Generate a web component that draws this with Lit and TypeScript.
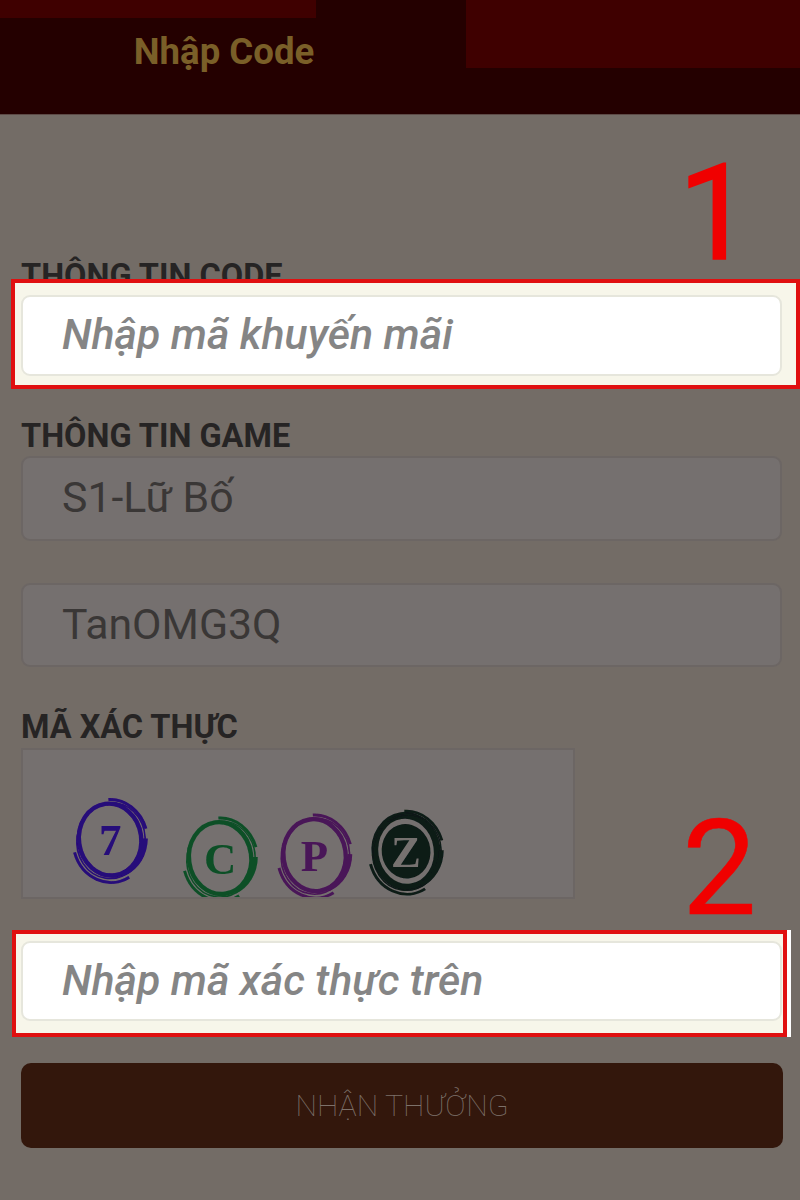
import { LitElement, html, css, svg } from "lit";
import { customElement } from "lit/decorators.js";

const swirl = (cx: number, cy: number, color: string, ch: string, solid = false) => svg`
  <g filter="url(#soft)">
    <g transform="translate(${cx} ${cy}) rotate(-8)">
      ${solid ? svg`<ellipse rx="25" ry="28" fill="${color}"></ellipse>` : ""}
      <ellipse rx="32" ry="37" fill="none" stroke="${color}" stroke-width="${solid ? 7 : 4.5}"></ellipse>
      <ellipse cx="1" cy="1" rx="35" ry="39" fill="none" stroke="${color}" stroke-width="1.6" transform="rotate(16)"></ellipse>
      <path d="M-38 8A38 42 0 0 0 14 41" fill="none" stroke="${color}" stroke-width="3"></path>
      <path d="M4 -41A37 42 0 0 1 38 -6" fill="none" stroke="${color}" stroke-width="3"></path>
      <path d="M10 36A35 40 0 0 0 36 4" fill="none" stroke="${color}" stroke-width="5"></path>
    </g>
    <text class="glyph" x="${cx}" y="${cy + 16}" text-anchor="middle" fill="${solid ? "#77726f" : color}">${ch}</text>
  </g>
`;

@customElement("app-root")
export class AppRoot extends LitElement {
  static styles = css`
    :host { display: block; width: 800px; height: 1200px; overflow: hidden; position: relative; background: #736c66; font-family: Roboto, "Noto Sans", sans-serif; }
    * { box-sizing: border-box; }
    header { height: 115px; background: #240000; border-bottom: 1px solid #5c4a46; display: flex; }
    .tab { width: 466px; display: flex; flex-direction: column; }
    .strip { width: 316px; height: 18px; background: #3f0000; }
    .title { width: 448px; margin-top: 14px; text-align: center; font-size: 36.6px; line-height: 40px; font-weight: 700; color: #7a5f28; }
    .side { width: 334px; height: 68px; background: #3f0000; }
    main { padding: 0 18px 0 21px; display: flex; flex-direction: column; }
    .label { font-size: 32.5px; line-height: 34px; font-weight: 700; color: #262424; white-space: nowrap; }
    .l1 { margin-top: 144px; height: 20px; }
    .l2 { margin-top: 30px; height: 37px; }
    .l3 { margin-top: 43px; height: 38px; }
    .field { height: 85px; border: 2px solid #6c6664; border-radius: 9px; background: #75706f; padding: 0 0 3px 39px; display: flex; align-items: center; font-size: 42.8px; color: #3a3736; }
    .field + .field { margin-top: 42px; height: 84px; }
    .mark { border: 4px solid #e01010; background: #f7f6ea; display: flex; }
    .m1 { margin: 0 -18px 0 -10px; height: 110px; padding: 12px 14px 9px 6px; }
    .m2 { margin: 31px -5px 0 -9px; height: 107px; padding: 7px 1px 12px 5px; box-shadow: 4px 0 0 #fff; }
    .input { flex: 1; border: 2px solid #e6e6dc; border-radius: 9px; background: #fff; padding: 0 0 3px 39px; display: flex; align-items: center; font-size: 42.8px; font-style: italic; font-weight: 500; color: #858585; }
    .captcha { width: 554px; height: 151px; border: 2px solid #6c6664; background: #75706f; display: block; }
    .glyph { font-family: "Liberation Serif", serif; font-size: 46px; font-weight: 700; }
    .btn { margin: 26px -1px 0 0; height: 85px; border-radius: 10px; background: #33170c; display: flex; align-items: center; justify-content: center; font-size: 30.4px; font-weight: 100; color: #7d716a; }
    .num { position: absolute; font-family: Roboto, sans-serif; font-size: 133px; line-height: 133px; font-weight: 400; color: #f00000; }
    .n1 { left: 678px; top: 147px; -webkit-text-stroke: 1.5px #f00000; }
    .n2 { left: 682px; top: 802px; -webkit-text-stroke: 0.5px #f00000; }
  `;

  render() {
    return html`
      <header>
        <div class="tab"><div class="strip"></div><div class="title">Nhập Code</div></div>
        <div class="side"></div>
      </header>
      <main>
        <div class="label l1">THÔNG TIN CODE</div>
        <div class="mark m1"><div class="input">Nhập mã khuyến mãi</div></div>
        <div class="label l2">THÔNG TIN GAME</div>
        <div class="field">S1-Lữ Bố</div>
        <div class="field">TanOMG3Q</div>
        <div class="label l3">MÃ XÁC THỰC</div>
        <svg class="captcha" viewBox="0 0 554 151" width="554" height="151">
          <defs><filter id="soft"><feGaussianBlur stdDeviation="0.8"></feGaussianBlur></filter></defs>
          ${swirl(84, 92, "#26087a", "7")}
          ${swirl(197, 111, "#0b5028", "C")}
          ${swirl(294, 108, "#4a1458", "P")}
          ${swirl(388, 104, "#0b1a16", "Z", true)}
        </svg>
        <div class="mark m2"><div class="input">Nhập mã xác thực trên</div></div>
        <div class="btn">NHẬN THƯỞNG</div>
      </main>
      <div class="num n1">1</div>
      <div class="num n2">2</div>
    `;
  }
}
